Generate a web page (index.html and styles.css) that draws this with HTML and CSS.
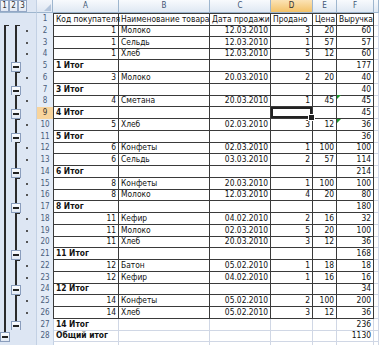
FILE: index.html
```html
<!DOCTYPE html>
<html>
<head>
    <title>Итоги по покупателям</title>
    <link rel="stylesheet" href="styles.css">
</head>
<body>
    <div class="sheet" id="sheet">
        <div class="row head">
            <div class="levels"><span>1</span><span>2</span><span>3</span></div>
            <div class="corner"></div>
            <div class="col">A</div>
            <div class="col">B</div>
            <div class="col">C</div>
            <div class="col active">D</div>
            <div class="col">E</div>
            <div class="col">F</div>
            <div class="col"></div>
        </div>
    </div>

    <script>
        var data = [
            ["Код покупателя", "Наименование товара", "Дата продажи", "Продано", "Цена", "Выручка"],
            ["1", "Молоко", "12.03.2010", "3", "20", "60"],
            ["1", "Сельдь", "12.03.2010", "1", "57", "57"],
            ["1", "Хлеб", "12.03.2010", "5", "12", "60"],
            ["1 Итог", "", "", "", "", "177"],
            ["3", "Молоко", "20.03.2010", "2", "20", "40"],
            ["3 Итог", "", "", "", "", "40"],
            ["4", "Сметана", "20.03.2010", "1", "45", "45"],
            ["4 Итог", "", "", "", "", "45"],
            ["5", "Хлеб", "02.03.2010", "3", "12", "36"],
            ["5 Итог", "", "", "", "", "36"],
            ["6", "Конфеты", "02.03.2010", "1", "100", "100"],
            ["6", "Сельдь", "03.03.2010", "2", "57", "114"],
            ["6 Итог", "", "", "", "", "214"],
            ["8", "Конфеты", "20.03.2010", "1", "100", "100"],
            ["8", "Молоко", "12.03.2010", "4", "20", "80"],
            ["8 Итог", "", "", "", "", "180"],
            ["11", "Кефир", "04.02.2010", "2", "16", "32"],
            ["11", "Молоко", "02.03.2010", "5", "20", "100"],
            ["11", "Хлеб", "20.03.2010", "3", "12", "36"],
            ["11 Итог", "", "", "", "", "168"],
            ["12", "Батон", "05.02.2010", "1", "18", "18"],
            ["12", "Кефир", "04.02.2010", "1", "16", "16"],
            ["12 Итог", "", "", "", "", "34"],
            ["14", "Конфеты", "05.02.2010", "2", "100", "200"],
            ["14", "Хлеб", "05.02.2010", "3", "12", "36"],
            ["14 Итог", "", "", "", "", "236"],
            ["Общий итог", "", "", "", "", "1130"],
            ["", "", "", "", "", ""]
        ];

        var sheet = document.getElementById("sheet");
        var prevTotal = true;

        function cell(row, cls, text) {
            var el = document.createElement("div");
            el.className = cls;
            el.textContent = text;
            row.appendChild(el);
            return el;
        }

        function outline(row, kind, level) {
            var el = cell(row, "o o" + level + " " + kind, "");
            if (kind === "minus") {
                el.appendChild(document.createElement("span")).className = "box";
            }
        }

        for (var i = 0; i < data.length; i++) {
            var n = i + 1;
            var r = data[i];
            var total = r[0].indexOf("тог") > 0;
            var detail = n > 1 && n < 29 && !total;
            var row = document.createElement("div");
            row.className = "row" + (n <= 26 ? " t" : "") + (n === 1 ? " first" : "");

            // level 1
            var k1 = "";
            if (n === 2) k1 = "start";
            else if (n > 2 && n < 28) k1 = "line";
            else if (n === 28) k1 = "minus";
            outline(row, k1, 1);

            // level 2
            var k2 = "";
            if (detail) k2 = prevTotal ? "start" : "line";
            else if (total && n < 28) k2 = "minus";
            outline(row, k2, 2);

            outline(row, detail ? "dot" : "", 3);

            cell(row, "rh" + (n === 9 ? " active" : ""), n < 29 ? n : "");

            var right = n > 1 ? " num" : "";
            cell(row, "c a" + (total ? " bold" : right), r[0]);
            cell(row, "c", r[1]);
            cell(row, "c" + right, r[2]);
            var d = cell(row, "c" + right, r[3]);
            cell(row, "c" + right, r[4]);
            var f = cell(row, "c" + right, r[5]);
            cell(row, "c g", "");

            if (n === 9) d.className += " sel";
            if (n === 8 || n === 10) f.className += " warn";

            sheet.appendChild(row);
            prevTotal = total || n === 1;
        }
    </script>
</body>
</html>
```

FILE: styles.css
```css
* {
    box-sizing: border-box;
}
body {
    margin: 0;
    font-family: "DejaVu Sans Condensed", "DejaVu Sans", sans-serif;
    font-stretch: condensed;
    font-size: 8.4px;
    color: #111;
    background: #fff;
    overflow: hidden;
}
.sheet {
    width: 379px;
    height: 345px;
    overflow: hidden;
}
.row {
    display: grid;
    grid-template-columns: 11px 11px 14px 17px 66px 91px 61px 42px 24px 37px 1fr;
    height: 11.75px;
}
.row.head {
    height: 13px;
}

/* header row */
.levels {
    grid-column: span 3;
    display: flex;
    background: #dde6f3;
    border-bottom: 1px solid #9eb6ce;
}
.levels span {
    width: 9px;
    height: 12px;
    border: 1px solid #93a7c5;
    background: linear-gradient(#f7f9fc, #e2e9f4);
    color: #333;
    font-size: 8px;
    line-height: 10px;
    text-align: center;
}
.corner {
    position: relative;
    background: linear-gradient(#f3f6fb, #dfe7f2);
    border-left: 1px solid #c3d1e4;
    border-right: 1px solid #9eb6ce;
    border-bottom: 1px solid #9eb6ce;
}
.corner::after {
    content: "";
    position: absolute;
    right: 1px;
    bottom: 1px;
    border-left: 7px solid transparent;
    border-bottom: 7px solid #b4c5dc;
}
.col {
    background: linear-gradient(#f8fafd, #dfe8f3);
    border-right: 1px solid #9eb6ce;
    border-bottom: 1px solid #9eb6ce;
    color: #405574;
    text-align: center;
    line-height: 12px;
    font-size: 8px;
}
.col.active {
    background: linear-gradient(#fbe3b6, #f3c268);
    color: #333;
}

/* outline column */
.o {
    display: flex;
    background: #dde6f3;
}
.o.line::before,
.o.start::before {
    content: "";
    width: 2px;
    margin-left: 4px;
    background: #2a2a2a;
}
.o.start::after {
    content: "";
    width: 3px;
    height: 1px;
    background: #2a2a2a;
}
.o.dot {
    align-items: center;
}
.o.dot::before {
    content: "";
    width: 2px;
    height: 2px;
    margin-left: 4px;
    background: #555;
}
.o.minus {
    flex-direction: column;
}
.o.minus::before {
    content: "";
    flex: 1;
    width: 2px;
    margin-left: 4px;
    background: #2a2a2a;
}
.box {
    display: flex;
    align-items: center;
    justify-content: center;
    width: 10px;
    height: 10px;
    border: 1px solid #8a9dbc;
    background: linear-gradient(#fbfcfe, #e1e8f3);
}
.box::after {
    content: "";
    width: 6px;
    height: 2px;
    background: #222;
}

/* row numbers */
.rh {
    background: #e4ecf7;
    border-left: 1px solid #c3d1e4;
    color: #4a5d7c;
    text-align: center;
    line-height: 11px;
    font-size: 8px;
}
.rh.active {
    background: #f8d49c;
    color: #333;
}

/* cells */
.c {
    position: relative;
    padding: 0 1px 0 2px;
    border-right: 1px solid #d0d7e5;
    border-bottom: 1px solid #d0d7e5;
    white-space: nowrap;
    line-height: 11px;
}
.c.a {
    border-left: 1px solid #c3d1e4;
}
.t .c {
    border-color: #3a3a3a;
}
.t .c.g {
    border-color: #d0d7e5;
}
.first .c {
    border-top: 1px solid #3a3a3a;
}
.first .c.g {
    border-top: none;
}
.num {
    text-align: right;
    padding-right: 2px;
}
.bold {
    font-weight: bold;
}
.sel {
    box-shadow: inset 0 0 0 2px #222;
}
.sel::after {
    content: "";
    position: absolute;
    right: -3px;
    bottom: -3px;
    width: 5px;
    height: 5px;
    background: #222;
    border: 1px solid #fff;
    z-index: 1;
}
.warn::before {
    content: "";
    position: absolute;
    left: 0;
    top: 0;
    border-top: 4px solid #1e9a2e;
    border-right: 4px solid transparent;
}
```
